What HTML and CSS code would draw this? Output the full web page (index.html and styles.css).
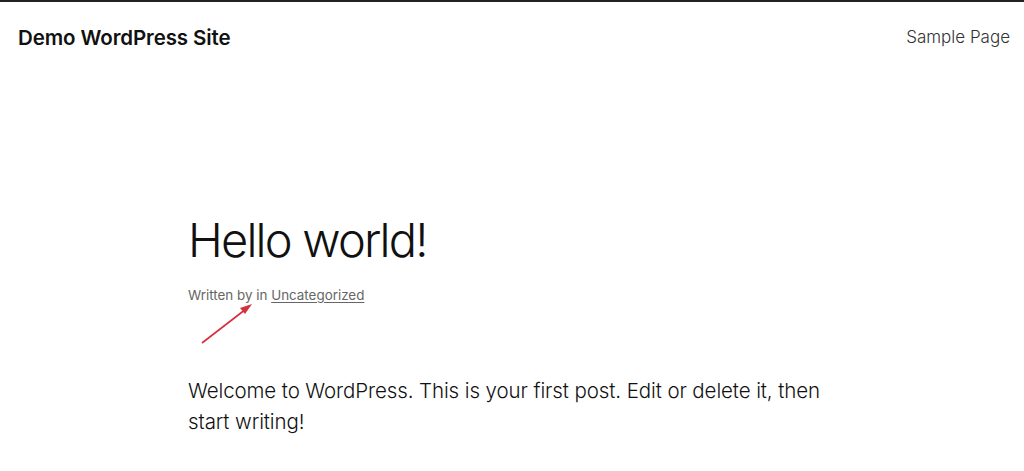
FILE: index.html
```html
<!DOCTYPE html>
<html lang="en">
<head>
  <meta charset="UTF-8">
  <meta name="viewport" content="width=device-width, initial-scale=1.0">
  <title>Demo WordPress Site</title>
  <link rel="stylesheet" href="styles.css">
</head>
<body>
  <header class="site-header">
    <a class="site-title" href="#">Demo WordPress Site</a>
    <nav class="site-nav">
      <a href="#">Sample Page</a>
    </nav>
  </header>

  <main class="post">
    <h1 class="post-title">Hello world!</h1>
    <div class="post-meta">
      Written by in <a href="#">Uncategorized</a>
      <!-- annotation arrow -->
      <svg class="arrow" width="60" height="50" viewBox="0 0 60 50">
        <line x1="4" y1="46" x2="48" y2="12" stroke="#d6303a" stroke-width="1.6"/>
        <polygon points="54,7 42,11 47,17" fill="#d6303a"/>
      </svg>
    </div>
    <div class="post-content">
      <p>Welcome to WordPress. This is your first post. Edit or delete it, then start writing!</p>
    </div>
  </main>
</body>
</html>
```

FILE: styles.css
```css
body {
  margin: 0;
  border-top: 2px solid #222;
  font-family: 'Inter', 'Noto Sans', sans-serif;
  color: #111;
  background: #fff;
}

a {
  color: inherit;
  text-decoration: none;
}

.site-header {
  display: flex;
  justify-content: space-between;
  align-items: center;
  padding: 22px 14px 0 18px;
  height: 26px;
}

.site-title {
  font-size: 20.5px;
  font-weight: 600;
  letter-spacing: -0.1px;
}

.site-nav a {
  font-size: 17px;
  font-weight: 300;
  color: #333;
}

.post {
  width: 648px;
  margin: 0 auto;
  padding-top: 162px;
}

.post-title {
  margin: 0;
  font-size: 47px;
  font-weight: 300;
  letter-spacing: -1.8px;
  line-height: 1.2;
}

.post-meta {
  position: relative;
  margin-top: 19px;
  font-size: 13.4px;
  color: #666;
}

.post-meta a {
  text-decoration: underline;
  text-underline-offset: 2px;
}

.arrow {
  position: absolute;
  left: 10px;
  top: 10px;
}

.post-content p {
  margin: 73px 0 0;
  font-size: 20.5px;
  font-weight: 300;
  line-height: 1.5;
  letter-spacing: -0.1px;
  color: #111;
}
```
